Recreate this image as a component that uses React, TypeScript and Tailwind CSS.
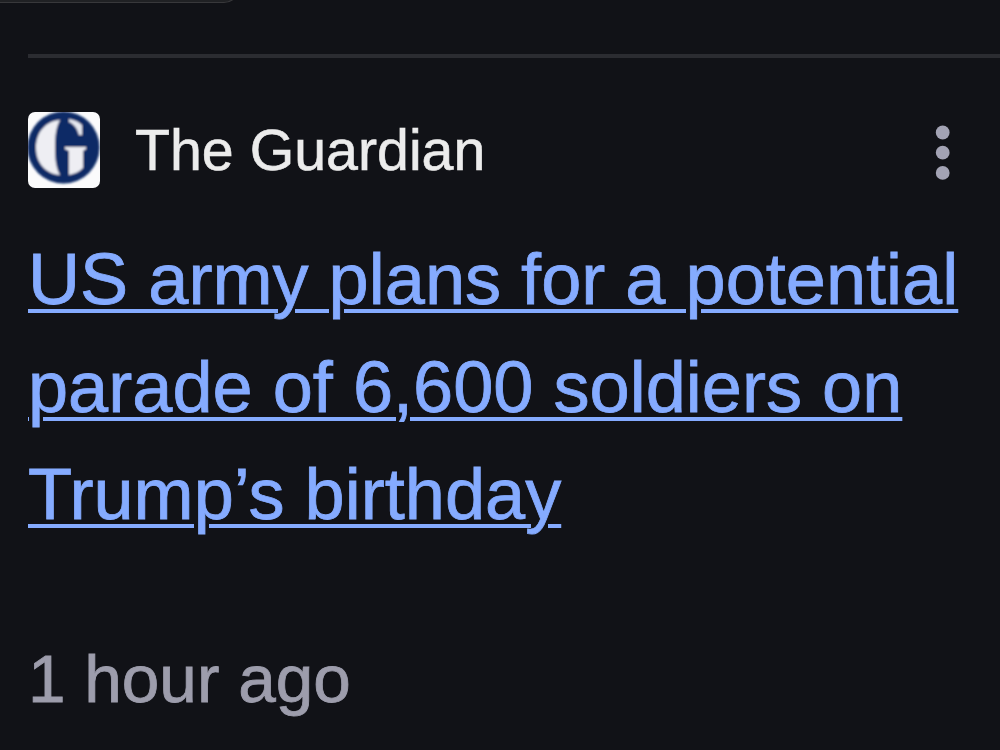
/* ─── source favicon ─── */
function GuardianIcon() {
  return (
    <svg
      width="72"
      height="76"
      viewBox="0 0 72 76"
      className="shrink-0"
      aria-hidden
    >
      <defs>
        <clipPath id="icon-clip">
          <rect width="72" height="76" rx="7" />
        </clipPath>
        <filter id="icon-soft">
          <feGaussianBlur stdDeviation="1.2" />
        </filter>
      </defs>
      <g clipPath="url(#icon-clip)">
        <rect width="72" height="76" fill="#fbfbfc" />
        <g filter="url(#icon-soft)">
          <ellipse cx="35.5" cy="35.5" rx="36" ry="36" fill="#0b2a66" />
          <path
            d="M32 8 C18 9 8 20 8 36 C8 51 18 62 32 63 C28 56 27 47 27 36 C27 24 28 15 32 8 Z"
            fill="#eeeef3"
          />
          <path
            d="M41 7 C47 8 51 10 54 13 L54 23 L51 23 C49 16 46 12 41 10 Z"
            fill="#e6e8f0"
          />
          <path
            d="M37 35 L58 35 L58 37 L55 39 L55 56 C51 60 46 62 41 63 L41 39 L37 37 Z"
            fill="#eeeef3"
          />
        </g>
      </g>
    </svg>
  );
}

function MenuButton() {
  return (
    <button type="button" aria-label="More options" className="mt-[5px] ml-auto">
      <svg width="16" height="56" viewBox="0 0 16 56" fill="#a3a3b4">
        <circle cx="7.7" cy="7.5" r="6.9" />
        <circle cx="7.7" cy="27.7" r="6.9" />
        <circle cx="7.7" cy="47.9" r="6.9" />
      </svg>
    </button>
  );
}

const HEADLINE = [
  "US army plans for a potential",
  "parade of 6,600 soldiers on",
  "Trump’s birthday",
];

export default function App() {
  return (
    <main className="h-[750px] w-[1000px] overflow-hidden bg-[#111217] font-['Liberation_Sans',Arial,sans-serif]">
      {/* bottom edge of the previous card */}
      <div className="h-[3px] w-[240px] overflow-hidden">
        <div className="-mt-5 h-[23px] rounded-br-2xl border-r-2 border-b border-[#38383b] bg-[#202124]" />
      </div>

      <hr className="mt-[51px] ml-7 h-[4px] border-0 bg-[#2b2c31]" />

      <article className="flex flex-col pl-7">
        <header className="mt-[54px] flex h-[76px] items-center pr-[49px]">
          <GuardianIcon />
          <span className="ml-[35px] text-[57.3px] leading-[76px] whitespace-nowrap text-[#ececec] [-webkit-text-stroke:0.6px_#ececec]">
            The Guardian
          </span>
          <MenuButton />
        </header>

        <h2 className="mt-[38px] text-[72.15px] leading-[107.5px] whitespace-nowrap text-[#85abff] [-webkit-text-stroke:0.8px_#85abff]">
          <a href="#">
            {HEADLINE.map((line) => (
              <span
                key={line}
                className="block underline decoration-[4px] underline-offset-[5px]"
              >
                {line}
              </span>
            ))}
          </a>
        </h2>

        <time className="mt-[90px] text-[67.5px] leading-[80px] text-[#9d9dac] [-webkit-text-stroke:0.8px_#9d9dac]">
          1 hour ago
        </time>
      </article>
    </main>
  );
}
